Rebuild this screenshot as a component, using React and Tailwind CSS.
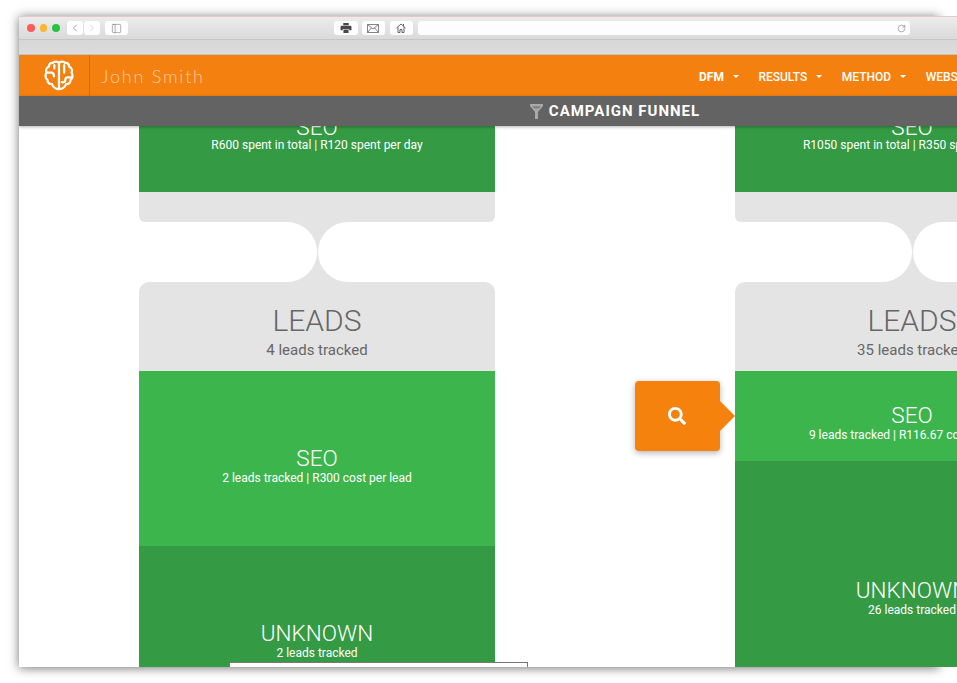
import { ChevronLeft, ChevronRight, PanelLeft, RotateCw } from 'lucide-react'
import { FaSearch } from 'react-icons/fa'

const NAV = ['DFM', 'RESULTS', 'METHOD', 'WEBSITE']

const COLUMNS = [
  {
    width: 'w-[356px]',
    spend: 'R600 spent in total | R120 spent per day',
    leads: '4 leads tracked',
    rows: [
      { title: 'SEO', text: '2 leads tracked | R300 cost per lead', h: 'h-[175px]', bg: 'bg-[#3cb54c]' },
      { title: 'UNKNOWN', text: '2 leads tracked', h: 'h-[175px]', bg: 'bg-[#359a44]' },
    ],
  },
  {
    width: 'w-[354px]',
    spend: 'R1050 spent in total | R350 spent per day',
    leads: '35 leads tracked',
    search: true,
    rows: [
      { title: 'SEO', text: '9 leads tracked | R116.67 cost per lead', h: 'h-[90px]', bg: 'bg-[#3cb54c]' },
      { title: 'UNKNOWN', text: '26 leads tracked', h: 'h-[260px]', bg: 'bg-[#359a44]' },
    ],
  },
]

function BrainLogo() {
  return (
    <svg width="30" height="33" viewBox="0 0 32 34" fill="none" stroke="white" strokeWidth="2.4" strokeLinecap="round" strokeLinejoin="round">
      <path d="M16 3.5C14.5 1.8 11 1.5 9.5 3.5C7 3 5 5 5.3 7.5C2.6 8.8 1.5 11.5 2.6 14C1 16.5 1.3 20 3.6 21.5C3.6 24.5 5.8 26.5 8.6 26.3C9.6 29.5 13 31.5 16 31.5C19 31.5 22.4 29.5 23.4 26.3C26.2 26.5 28.4 24.5 28.4 21.5C30.7 20 31 16.5 29.4 14C30.5 11.5 29.4 8.8 26.7 7.5C27 5 25 3 22.5 3.5C21 1.5 17.5 1.8 16 3.5Z" />
      <path d="M16 3.5V31" />
      <path d="M2.8 14H7.5C9.5 14 10.5 15 10.5 17V18" />
      <path d="M11 6V9.5" />
      <path d="M21.5 6V14" />
      <path d="M29 19H25C23.5 19 22.8 20 22.8 21.5C22.8 24 20.5 25 19 24" />
    </svg>
  )
}

function Funnel() {
  return (
    <svg width="13" height="15" viewBox="0 0 13 15" fill="#a9a9a9">
      <path d="M0 0H13V2L8 8V15H5V8L0 2Z" />
      <path d="M2.2 2.2H10.8L8.8 4.6H4.2Z" fill="#7f7f7f" />
    </svg>
  )
}

function PrintIcon() {
  return (
    <svg width="12" height="10" viewBox="0 0 12 11" fill="#484848">
      <path d="M3 0H9V2.5H3Z" />
      <path d="M1 3H11C11.6 3 12 3.4 12 4V8H9.5V6.5H2.5V8H0V4C0 3.4 .4 3 1 3Z" />
      <path d="M3.2 7.2H8.8V11H3.2Z" />
    </svg>
  )
}

function MailIcon() {
  return (
    <svg width="12" height="9" viewBox="0 0 12 9" fill="none" stroke="#666" strokeWidth="0.8">
      <path d="M.5 .5H11.5V8.5H.5Z" />
      <path d="M.5 .5L6 5L11.5 .5" />
      <path d="M.5 8.5L4.5 3.8M11.5 8.5L7.5 3.8" />
    </svg>
  )
}

function HomeIcon() {
  return (
    <svg width="10" height="10" viewBox="0 0 10 10" fill="none" stroke="#555" strokeWidth="0.9">
      <path d="M.5 5L5 1L9.5 5" />
      <path d="M2 4.2V9.5H4V6.5H6V9.5H8V4.2" />
      <path d="M7.5 1V3" />
    </svg>
  )
}

function ToolButton({ className, children }) {
  return (
    <div className={`flex items-center justify-center h-[14px] rounded-[3px] bg-[#fdfdfd] text-[#555] ${className}`}>
      {children}
    </div>
  )
}

function Row({ title, text, h, bg }) {
  return (
    <div className={`${h} ${bg} flex flex-col items-center justify-center pt-[12px] text-white overflow-hidden`}>
      <p className="text-[22.5px] font-light leading-[26px] whitespace-nowrap">{title}</p>
      <p className="text-[12px] leading-[14px] whitespace-nowrap">{text}</p>
    </div>
  )
}

function Column({ width, spend, leads, rows, search }) {
  return (
    <div className={`relative shrink-0 ${width}`}>
      {search && (
        <div className="absolute left-[-100px] top-[255px] z-10 flex items-center">
          <div className="w-[85px] h-[70px] rounded-[4px] bg-[#f5820d] shadow-[0_2px_6px_rgba(0,0,0,0.3)] flex items-center justify-center pr-[1px] text-white">
            <FaSearch size={18} />
          </div>
          <div className="w-0 h-0 border-y-[15px] border-y-transparent border-l-[15px] border-l-[#f5820d]" />
        </div>
      )}
      <div className="h-[66px] bg-[#359a44] flex flex-col items-center justify-end pb-[40px] text-white overflow-hidden">
        <p className="text-[22.5px] font-light leading-[26px]">SEO</p>
        <p className="text-[12px] leading-[14px] -mt-[2px] whitespace-nowrap">{spend}</p>
      </div>
      <div className="h-[30px] bg-[#e4e4e4] rounded-b-[6px]" />
      <div className="h-[60px] bg-[#e4e4e4] flex gap-[1px]">
        <div className="flex-1 bg-white rounded-r-[30px]" />
        <div className="flex-1 bg-white rounded-l-[30px]" />
      </div>
      <div className="h-[89px] bg-[#e4e4e4] rounded-t-[10px] flex flex-col items-center pt-[21px] text-[#666]">
        <p className="text-[30px] font-light leading-[36px]">LEADS</p>
        <p className="text-[15px] leading-[20px] mt-[1px] whitespace-nowrap">{leads}</p>
      </div>
      {rows.map((r) => (
        <Row key={r.title} {...r} />
      ))}
    </div>
  )
}

export default function App() {
  return (
    <div className="w-[957px] h-[683px] overflow-hidden bg-white pl-[19px] pt-[16px] font-['Roboto',sans-serif]">
      <div className="w-[920px] h-[651px] shadow-[0_1px_10px_rgba(0,0,0,0.55)]">
        <div className="w-[938px] h-[651px] flex flex-col overflow-hidden bg-white">
          {/* browser toolbar */}
          <div className="h-[24px] shrink-0 border-t border-[#e3c9c9] border-b border-b-[#c6c6c6] bg-gradient-to-b from-[#ececec] to-[#dadada] flex items-center pl-[8px]">
            <div className="flex gap-[5px]">
              <span className="w-[7.5px] h-[7.5px] rounded-full bg-[#fc5b57]" />
              <span className="w-[7.5px] h-[7.5px] rounded-full bg-[#fdb62f]" />
              <span className="w-[7.5px] h-[7.5px] rounded-full bg-[#27c53f]" />
            </div>
            <div className="flex gap-[1px] ml-[7px]">
              <ToolButton className="w-[16px]"><ChevronLeft size={12} strokeWidth={1} /></ToolButton>
              <ToolButton className="w-[16px] text-[#bbb]"><ChevronRight size={12} strokeWidth={1} /></ToolButton>
            </div>
            <ToolButton className="w-[23px] ml-[5px]"><PanelLeft size={11} strokeWidth={1} /></ToolButton>
            <ToolButton className="w-[24px] ml-[206px]"><PrintIcon /></ToolButton>
            <ToolButton className="w-[23px] ml-[4px]"><MailIcon /></ToolButton>
            <ToolButton className="w-[23px] ml-[5px]"><HomeIcon /></ToolButton>
            <ToolButton className="w-[492px] ml-[5px] justify-end pr-[4px]"><RotateCw size={9} strokeWidth={1.2} /></ToolButton>
          </div>
          <div className="h-[15px] shrink-0 bg-gradient-to-b from-[#d6d6d6] to-[#dcdcdc] border-b border-[#bfc6c6]" />

          {/* orange header */}
          <div className="h-[41px] shrink-0 bg-[#f4810f] flex items-center text-white">
            <div className="w-[71px] shrink-0 h-full border-r border-[#cf6f10] flex items-center pl-[25px]">
              <BrainLogo />
            </div>
            <div className="w-[609px] shrink-0 pl-[11px] pt-[1px] font-['Lato',sans-serif] font-light text-[18px] tracking-[1.8px] text-white/60">
              John Smith
            </div>
            <nav className="flex shrink-0 pt-[2px] text-[12px] font-medium whitespace-nowrap">
              {NAV.map((item, i) => (
                <div key={item} className="flex items-center mr-[19.5px]">
                  <span className={i === 0 ? 'font-bold' : ''}>{item}</span>
                  <span className="ml-[9px] w-0 h-0 border-x-[3.5px] border-x-transparent border-t-[3.5px] border-t-white" />
                </div>
              ))}
            </nav>
          </div>

          {/* campaign funnel bar */}
          <div className="relative z-20 h-[30px] w-[1192px] shrink-0 bg-[#636363] shadow-[0_1px_3px_rgba(0,0,0,0.3)] flex items-center justify-center gap-[6px] text-white">
            <Funnel />
            <span className="text-[15px] font-bold tracking-[1px]">CAMPAIGN FUNNEL</span>
          </div>

          {/* funnel columns */}
          <div className="relative flex-1 w-[1192px] overflow-hidden flex gap-[240px] pl-[120px]">
            {COLUMNS.map((c) => (
              <Column key={c.leads} {...c} />
            ))}
            <div className="absolute left-[210px] top-[536px] w-[299px] h-[60px] bg-white border border-[#777]" />
          </div>
        </div>
      </div>
    </div>
  )
}
